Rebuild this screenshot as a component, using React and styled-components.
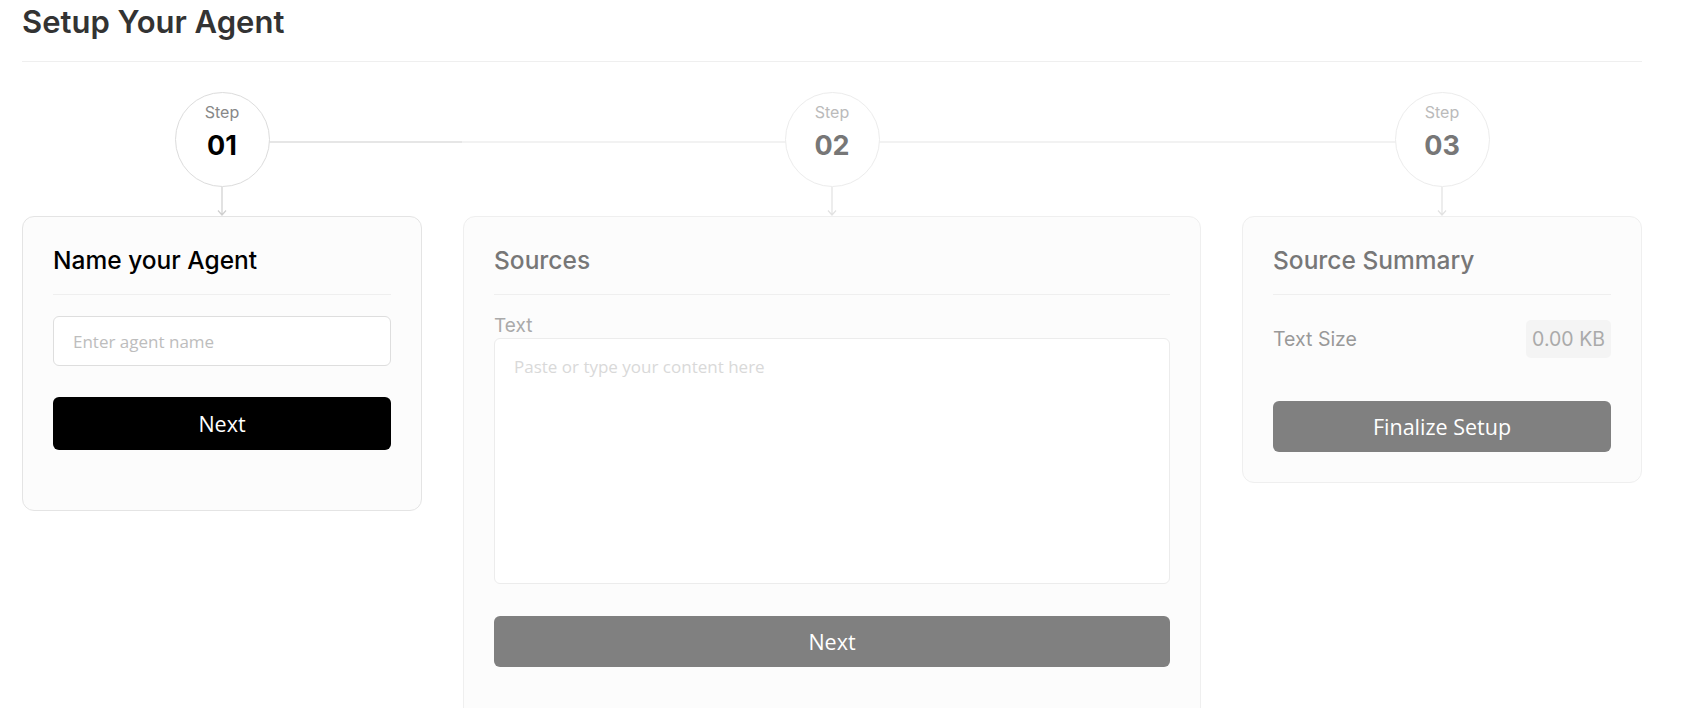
import React from 'react';
import styled, { createGlobalStyle } from 'styled-components';

const GlobalStyle = createGlobalStyle`
  html, body {
    margin: 0;
    padding: 0;
    background: #ffffff;
    overflow: hidden;
  }

  body {
    font-family: Inter, "Noto Sans", sans-serif;
    color: #333;
  }

  * {
    box-sizing: border-box;
  }
`;

const Page = styled.div`
  padding: 0 49px 0 22px;
`;

const Header = styled.div`
  border-bottom: 1px solid #efefef;
  padding: 3px 0 21px;
`;

const PageTitle = styled.h1`
  margin: 0;
  font-size: 31px;
  line-height: 37px;
  font-weight: 600;
  color: #333;
`;

const Columns = styled.div`
  display: grid;
  grid-template-columns: 400px 1fr 400px;
  column-gap: 41px;
  align-items: start;
`;

const StepsRow = styled(Columns)`
  position: relative;
  margin-top: 30px;
`;

const Track = styled.div`
  position: absolute;
  top: 49px;
  left: 200px;
  right: 200px;
  height: 2px;
  background: #f2f2f2;
`;

const TrackFill = styled.div`
  height: 100%;
  width: ${p => p.$progress}%;
  background: #e6e6e6;
`;

const StepCell = styled.div`
  position: relative;
  display: flex;
  flex-direction: column;
  align-items: center;
`;

const Circle = styled.div`
  width: 95px;
  height: 95px;
  border-radius: 50%;
  border: 1px solid ${p => (p.$active ? '#dcdcdc' : '#ececec')};
  background: #fff;
  display: flex;
  flex-direction: column;
  align-items: center;
  padding-top: 10px;
`;

const StepLabel = styled.span`
  font-size: 16px;
  line-height: 19px;
  color: ${p => (p.$active ? '#888' : '#bbb')};
`;

const StepNumber = styled.span`
  margin-top: 8px;
  font-size: 27px;
  line-height: 31px;
  font-weight: 700;
  color: ${p => (p.$active ? '#000' : '#777')};
`;

const Arrow = styled.svg`
  display: block;
  width: 10px;
  height: 29px;
  color: ${p => (p.$active ? '#cfcfcf' : '#e2e2e2')};
`;

const Card = styled.section`
  background: #fcfcfc;
  border: 1px solid ${p => (p.$active ? '#e4e4e4' : '#efefef')};
  border-radius: 12px;
  padding: 28px 30px ${p => p.$bottom || 30}px;
  display: flex;
  flex-direction: column;
`;

const CardTitle = styled.h2`
  margin: 0;
  padding-bottom: 19px;
  border-bottom: 1px solid #efefef;
  font-size: 24.5px;
  line-height: 30px;
  font-weight: 500;
  color: ${p => (p.$active ? '#000' : '#777')};
`;

const TextInput = styled.input`
  margin-top: 21px;
  height: 50px;
  width: 100%;
  border: 1px solid #dedede;
  border-radius: 6px;
  background: #fff;
  padding: 0 19px;
  font-family: "Segoe UI", "Open Sans", sans-serif;
  font-size: 17px;
  color: #333;
  outline: none;

  &::placeholder {
    color: #bdbdbd;
  }
`;

const FieldLabel = styled.label`
  margin-top: 19px;
  font-size: 19px;
  line-height: 23px;
  color: #aaa;
`;

const TextArea = styled.textarea`
  margin-top: 1px;
  height: 246px;
  width: 100%;
  resize: none;
  border: 1px solid #ececec;
  border-radius: 6px;
  background: #fff;
  padding: 16px 19px;
  font-family: "Segoe UI", "Open Sans", sans-serif;
  font-size: 17px;
  color: #333;
  outline: none;

  &::placeholder {
    color: #d9d9d9;
  }
`;

const Button = styled.button`
  margin-top: ${p => p.$gap}px;
  height: ${p => p.$height || 51}px;
  width: 100%;
  border: none;
  border-radius: 6px;
  background: ${p => (p.$primary ? '#000' : '#808080')};
  color: #fff;
  font-family: "Segoe UI", "Open Sans", sans-serif;
  font-size: 21.5px;
  cursor: pointer;
`;

const SummaryRow = styled.div`
  margin-top: 25px;
  display: flex;
  align-items: center;
  justify-content: space-between;
`;

const SummaryLabel = styled.span`
  font-size: 19.5px;
  color: #999;
`;

const SummaryValue = styled.span`
  height: 38px;
  display: flex;
  align-items: center;
  padding: 0 6px;
  border-radius: 5px;
  background: #f4f4f4;
  font-size: 19.5px;
  color: #aaa;
`;

const steps = [
  { label: 'Step', number: '01', active: true },
  { label: 'Step', number: '02', active: false },
  { label: 'Step', number: '03', active: false },
];

const DownArrow = ({ active }) => (
  <Arrow $active={active} viewBox="0 0 10 29" fill="none">
    <path d="M5 0V28M1 23.5L5 28L9 23.5" stroke="currentColor" strokeWidth="1.2" />
  </Arrow>
);

const App = () => {
  return (
    <Page>
      <GlobalStyle />
      <Header>
        <PageTitle>Setup Your Agent</PageTitle>
      </Header>

      <StepsRow>
        <Track>
          <TrackFill $progress={19.7} />
        </Track>
        {steps.map(step => (
          <StepCell key={step.number}>
            <Circle $active={step.active}>
              <StepLabel $active={step.active}>{step.label}</StepLabel>
              <StepNumber $active={step.active}>{step.number}</StepNumber>
            </Circle>
            <DownArrow active={step.active} />
          </StepCell>
        ))}
      </StepsRow>

      <Columns>
        <Card $active $bottom={60}>
          <CardTitle $active>Name your Agent</CardTitle>
          <TextInput placeholder="Enter agent name" />
          <Button $primary $gap={31} $height={53}>Next</Button>
        </Card>

        <Card $bottom={60}>
          <CardTitle>Sources</CardTitle>
          <FieldLabel>Text</FieldLabel>
          <TextArea placeholder="Paste or type your content here" />
          <Button $gap={32}>Next</Button>
        </Card>

        <Card>
          <CardTitle>Source Summary</CardTitle>
          <SummaryRow>
            <SummaryLabel>Text Size</SummaryLabel>
            <SummaryValue>0.00 KB</SummaryValue>
          </SummaryRow>
          <Button $gap={43}>Finalize Setup</Button>
        </Card>
      </Columns>
    </Page>
  );
};

export default App;
